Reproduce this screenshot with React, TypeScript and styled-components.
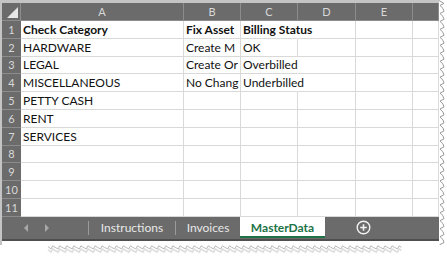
import { FC } from 'react';
import styled, { createGlobalStyle } from 'styled-components';

const GlobalStyle = createGlobalStyle`
    body {
        margin: 0;
        background: #ffffff;
    }
`;

const COLS = ['A', 'B', 'C', 'D', 'E', ''];
const COL_WIDTHS = '19px 163px 57px 57px 58px 57px 1fr';

type IRow = {
    cells: string[];
    bold?: boolean;
    // column index whose text spills into the next (empty) cell
    spill?: number;
};

const ROWS: IRow[] = [
    { cells: ['Check Category', 'Fix Asset', 'Billing Status'], bold: true, spill: 2 },
    { cells: ['HARDWARE', 'Create M', 'OK'] },
    { cells: ['LEGAL', 'Create Or', 'Overbilled'], spill: 2 },
    { cells: ['MISCELLANEOUS', 'No Chang', 'Underbilled'], spill: 2 },
    { cells: ['PETTY CASH'] },
    { cells: ['RENT'] },
    { cells: ['SERVICES'] },
    { cells: [] },
    { cells: [] },
    { cells: [] },
    { cells: [] },
];

const Page = styled.div`
    width: 447px;
    height: 256px;
    display: flex;
    flex-direction: column;
    overflow: hidden;
    font-family: Lato, 'Liberation Sans', sans-serif;
`;

const Body = styled.div`
    display: flex;
    flex: 0 0 auto;
`;

const Sheet = styled.div`
    width: 439px;
    border-top: 3px solid #c4c4c4;
    border-left: 2px solid #c4c4c4;
    display: flex;
    flex-direction: column;
`;

const Grid = styled.div`
    display: grid;
    grid-template-columns: ${COL_WIDTHS};
    grid-auto-rows: 17.8px;
    grid-template-rows: 18px;
    background: #ffffff;
`;

const ColHead = styled.div`
    background: #6b6b6b;
    color: #d9d9d9;
    font-size: 11px;
    display: flex;
    align-items: center;
    justify-content: center;
    border-right: 1px solid #8c8c8c;
    border-bottom: 1px solid #8c8c8c;
    position: relative;
`;

const Corner = styled.span`
    position: absolute;
    right: 2px;
    bottom: 2px;
    width: 0;
    height: 0;
    border-left: 11px solid transparent;
    border-bottom: 11px solid #e6e6e6;
`;

const RowHead = styled.div`
    background: #6b6b6b;
    color: #d9d9d9;
    font-size: 11px;
    display: flex;
    align-items: center;
    justify-content: center;
    border-bottom: 1px solid #8c8c8c;
`;

const Cell = styled.div<{ $bold?: boolean; $spill?: boolean }>`
    color: #111111;
    font-size: 12px;
    font-weight: ${(p) => (p.$bold ? 700 : 400)};
    border-right: 1px solid ${(p) => (p.$spill ? 'transparent' : '#d9d9d9')};
    border-bottom: 1px solid #d9d9d9;
    padding-left: 2px;
    white-space: nowrap;
    overflow: ${(p) => (p.$spill ? 'visible' : 'hidden')};
    display: flex;
    align-items: center;
    min-width: 0;
`;

const TabBar = styled.div`
    height: 22px;
    background: #6b6b6b;
    border-bottom: 2px solid #4f4f4f;
    display: flex;
    align-items: stretch;
    font-size: 12px;
`;

const Arrows = styled.div`
    width: 86px;
    display: flex;
    align-items: center;
    gap: 17px;
    padding-left: 22px;
    box-sizing: border-box;
`;

const Arrow = styled.span<{ $dir: 'left' | 'right' }>`
    width: 0;
    height: 0;
    border-top: 4px solid transparent;
    border-bottom: 4px solid transparent;
    ${(p) =>
        p.$dir === 'left'
            ? 'border-right: 4px solid #a8a8a8;'
            : 'border-left: 4px solid #a8a8a8;'}
`;

const Sep = styled.span`
    width: 1px;
    background: #9a9a9a;
    margin: 4px 0;
`;

const Tab = styled.div<{ $active?: boolean; $w: number }>`
    width: ${(p) => p.$w}px;
    display: flex;
    align-items: center;
    justify-content: center;
    color: ${(p) => (p.$active ? '#217346' : '#e8e8e8')};
    background: ${(p) => (p.$active ? '#ffffff' : 'transparent')};
    font-weight: ${(p) => (p.$active ? 700 : 400)};
    box-shadow: ${(p) => (p.$active ? 'inset 0 -2px 0 #217346' : 'none')};
    margin-bottom: ${(p) => (p.$active ? '1px' : '0')};
`;

const AddWrap = styled.div`
    width: 76px;
    display: flex;
    align-items: center;
    justify-content: center;
`;

const AddIcon: FC = () => (
    <svg width="15" height="15" viewBox="0 0 15 15">
        <circle cx="7.5" cy="7.5" r="6.3" fill="none" stroke="#f2f2f2" strokeWidth="1.4" />
        <path d="M7.5 4.2v6.6M4.2 7.5h6.6" stroke="#f2f2f2" strokeWidth="1.6" />
    </svg>
);

const TornRight: FC = () => {
    let d = 'M0 0';
    for (let y = 0; y < 245; y += 8) {
        d += ` L5 ${y + 3} L1 ${y + 5} L4 ${y + 8}`;
    }
    return (
        <svg width="8" height="245" viewBox="0 0 8 245">
            <path d={d} fill="none" stroke="#9a9a9a" strokeWidth="1" />
        </svg>
    );
};

const TornBottom: FC = () => {
    let d = 'M0 2';
    for (let x = 0; x < 447; x += 9) {
        d += ` L${x + 4} 5 L${x + 6} 1 L${x + 9} 3`;
    }
    return (
        <svg width="447" height="14" viewBox="0 0 447 14">
            <path d={d} fill="none" stroke="#b5b5b5" strokeWidth="1.2" />
            <path d={d} transform="translate(0 4)" fill="none" stroke="#dedede" strokeWidth="2" />
        </svg>
    );
};

const App: FC = () => (
    <>
        <GlobalStyle />
        <Page>
            <Body>
                <Sheet>
                    <Grid>
                        <ColHead>
                            <Corner />
                        </ColHead>
                        {COLS.map((c, i) => (
                            <ColHead key={`h${i}`}>{c}</ColHead>
                        ))}
                        {ROWS.map((row, r) => [
                            <RowHead key={`r${r}`}>{r + 1}</RowHead>,
                            ...COLS.map((_, c) => (
                                <Cell
                                    key={`c${r}-${c}`}
                                    $bold={row.bold}
                                    $spill={row.spill === c}
                                >
                                    {row.cells[c] || ''}
                                </Cell>
                            )),
                        ])}
                    </Grid>
                    <TabBar>
                        <Arrows>
                            <Arrow $dir="left" />
                            <Arrow $dir="right" />
                        </Arrows>
                        <Sep />
                        <Tab $w={86}>Instructions</Tab>
                        <Sep />
                        <Tab $w={64}>Invoices</Tab>
                        <Tab $w={85} $active>
                            MasterData
                        </Tab>
                        <AddWrap>
                            <AddIcon />
                        </AddWrap>
                    </TabBar>
                </Sheet>
                <TornRight />
            </Body>
            <TornBottom />
        </Page>
    </>
);

export default App;
